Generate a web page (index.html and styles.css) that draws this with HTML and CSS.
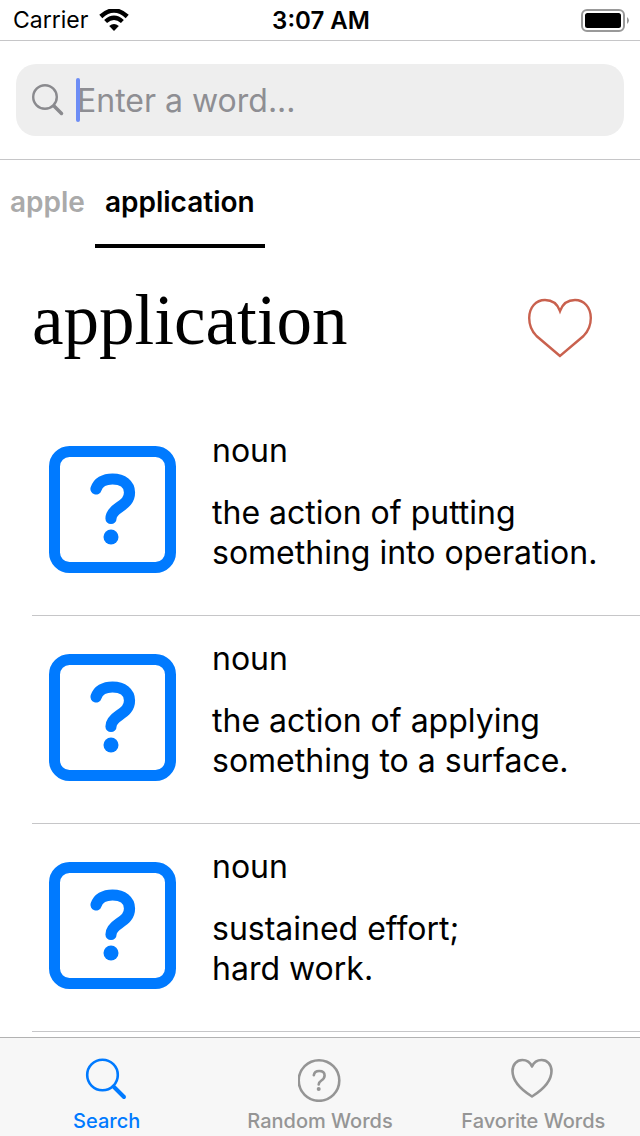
FILE: index.html
```html
<!DOCTYPE html>
<html lang="en">
<head>
<meta charset="utf-8">
<meta name="viewport" content="width=device-width, initial-scale=1">
<title>Dictionary</title>
<link rel="stylesheet" href="styles.css">
</head>
<body>
<svg class="defs" aria-hidden="true">
  <symbol id="question-box" viewBox="0 0 127 127">
    <rect x="5.5" y="5.5" width="116" height="116" rx="15" fill="none" stroke="currentColor" stroke-width="11"/>
    <path d="M47 43C49 36.500 55 33 63.500 33C74 33 80.500 38.500 80.500 46.500C80.500 54 76 57.500 70 61.500C64 65.500 62 68.500 62 72.500" fill="none" stroke="currentColor" stroke-width="11.200" stroke-linecap="round"/>
    <circle cx="62" cy="91" r="7.500" fill="currentColor"/>
  </symbol>
</svg>
<header class="status">
  <div class="carrier">
    <span>Carrier</span>
    <svg class="wifi" viewBox="0 0 30 22" aria-hidden="true">
      <path d="M1.800 7.500Q15-4.500 28.200 7.500" fill="none" stroke="currentColor" stroke-width="4.500"/>
      <path d="M6.600 12.500Q15 5 23.400 12.500" fill="none" stroke="currentColor" stroke-width="4.300"/>
      <path d="M10.200 17Q15 13 19.800 17L15 22Z" fill="currentColor"/>
    </svg>
  </div>
  <time class="time">3:07 AM</time>
  <svg class="battery" viewBox="0 0 48 23" aria-hidden="true">
    <rect x="1" y="1" width="42" height="21" rx="5" fill="none" stroke="#999" stroke-width="2"/>
    <rect x="4" y="4" width="36" height="15" rx="2.500"/>
    <path d="M46 8Q50 11.500 46 15Z" fill="#999"/>
  </svg>
</header>
<form class="search">
  <label class="field">
    <svg class="field-icon" viewBox="0 0 32 32" aria-label="Search">
      <circle cx="13" cy="13" r="11.800" fill="none" stroke="currentColor" stroke-width="2.400"/>
      <path d="M22 22L29.500 29.500" stroke="currentColor" stroke-width="3.500" stroke-linecap="round"/>
    </svg>
    <span class="entry"><input class="input" type="text" placeholder="Enter a word..."><span class="caret"></span></span>
  </label>
</form>
<nav class="words">
  <button class="word" type="button">apple</button>
  <button class="word active" type="button">application</button>
</nav>
<main class="main">
  <div class="heading">
    <h1 class="title">application</h1>
    <button class="favorite" type="button" aria-label="Add to favorites">
      <svg class="heart" viewBox="0 0 64 60" aria-hidden="true">
        <path d="M32 58L8.500 38C3.500 33 1.200 27 1.200 20C1.200 9.500 8 2 17 2C24 2 29.500 6 32 13C34.500 6 40 2 47 2C56 2 62.800 9.500 62.800 20C62.800 27 60.500 33 55.500 38Z" fill="none" stroke="currentColor" stroke-width="2.400"/>
      </svg>
    </button>
  </div>
  <ul class="list">
    <li class="item">
      <svg class="picture" aria-hidden="true"><use href="#question-box"/></svg>
      <div class="text"><p class="kind">noun</p><p class="meaning">the action of putting something into operation.</p></div>
    </li>
    <li class="item">
      <svg class="picture" aria-hidden="true"><use href="#question-box"/></svg>
      <div class="text"><p class="kind">noun</p><p class="meaning">the action of applying something to a surface.</p></div>
    </li>
    <li class="item">
      <svg class="picture" aria-hidden="true"><use href="#question-box"/></svg>
      <div class="text"><p class="kind">noun</p><p class="meaning">sustained effort;<br>hard work.</p></div>
    </li>
  </ul>
</main>
<nav class="tabbar">
  <a class="tab current" href="#search">
    <svg class="tab-icon" viewBox="0 0 44 44" aria-hidden="true">
      <circle cx="17.500" cy="17" r="15.300" fill="none" stroke="currentColor" stroke-width="2.600"/>
      <path d="M28.500 28.500L39 39" stroke="currentColor" stroke-width="4" stroke-linecap="round"/>
    </svg>
    <span>Search</span>
  </a>
  <a class="tab" href="#random">
    <svg class="tab-icon" viewBox="0 0 44 44" aria-hidden="true">
      <circle cx="21" cy="22.500" r="20.300" fill="none" stroke="currentColor" stroke-width="2.600"/>
      <path d="M15.800 17.300C16.200 14.500 18 13 21.200 13C24.500 13 26.600 14.800 26.600 17.500C26.600 20 25.400 21.200 23.400 22.500C21.400 23.800 20.700 24.700 20.700 26.500" fill="none" stroke="currentColor" stroke-width="2.600" stroke-linecap="round"/>
      <circle cx="20.700" cy="31" r="2" fill="currentColor"/>
    </svg>
    <span>Random Words</span>
  </a>
  <a class="tab" href="#favorites">
    <svg class="tab-icon" viewBox="0 0 44 44" aria-hidden="true">
      <path d="M21 38.500C13 33.500 1.500 24 1.500 13C1.500 6.500 5.700 2 11.300 2C16 2 19.300 4.500 21 8.500C22.700 4.500 26 2 30.700 2C36.300 2 40.500 6.500 40.500 13C40.500 24 29 33.500 21 38.500Z" fill="none" stroke="currentColor" stroke-width="2.600" stroke-linejoin="round"/>
    </svg>
    <span>Favorite Words</span>
  </a>
</nav>
</body>
</html>
```
FILE: styles.css
```css
* {
  box-sizing: border-box;
}

body {
  display: flex;
  flex-direction: column;
  min-height: 100vh;
  margin: 0;
  background: #fff;
  color: #000;
  font-family: Inter, "Liberation Sans", sans-serif;
}

button {
  padding: 0;
  border: 0;
  background: none;
  font: inherit;
}

svg {
  display: block;
  flex: none;
}

.defs {
  position: absolute;
  width: 0;
  height: 0;
}

.status {
  display: grid;
  grid-template-columns: 1fr auto 1fr;
  align-items: center;
  height: 41px;
  padding: 0 11px 0 13px;
  border-bottom: 1px solid #c6c6c8;
  font-size: 23px;
}

.carrier {
  display: flex;
  align-items: center;
  gap: 11px;
}

.wifi {
  width: 30px;
  height: 22px;
}

.time {
  font-size: 24px;
  font-weight: 600;
}

.battery {
  justify-self: end;
  width: 48px;
  height: 23px;
}

.search {
  padding: 23px 16px;
  border-bottom: 1px solid #c6c6c8;
}

.field {
  display: flex;
  align-items: center;
  gap: 12px;
  height: 72px;
  padding: 0 16px;
  border-radius: 20px;
  background: #eee;
  color: #8a8a8e;
}

.field-icon {
  width: 32px;
  height: 32px;
}

.entry {
  position: relative;
  flex: 1;
}

.input {
  width: 100%;
  height: 44px;
  padding: 0 1px;
  border: 0;
  outline: 0;
  background: none;
  color: #000;
  font: inherit;
  font-size: 32px;
}

.input::placeholder {
  color: #8e8e93;
  opacity: 1;
}

.caret {
  position: absolute;
  top: 0;
  left: 0;
  width: 4px;
  height: 44px;
  border-radius: 2px;
  background: #6d8df5;
}

.words {
  display: flex;
  height: 88px;
}

.word {
  padding: 0 10px;
  border-bottom: 4px solid transparent;
  color: #aaa;
  font-size: 28px;
  font-weight: 600;
}

.active {
  border-color: #000;
  color: #000;
}

.main {
  flex: 1;
}

.heading {
  display: flex;
  align-items: center;
  justify-content: space-between;
  height: 160px;
  padding: 0 48px 0 32px;
}

.title {
  margin: 0;
  padding-bottom: 16px;
  font-family: "Liberation Serif", serif;
  font-size: 71px;
  font-weight: 400;
  line-height: 80px;
}

.favorite {
  color: #c9614e;
}

.heart {
  width: 64px;
  height: 60px;
}

.list {
  margin: 0;
  padding: 0 0 0 32px;
  list-style: none;
}

.item {
  display: flex;
  gap: 36px;
  align-items: flex-end;
  padding: 23px 16px 42px 17px;
  border-bottom: 1px solid #c6c6c8;
}

.picture {
  width: 127px;
  height: 127px;
  color: #007aff;
}

.text {
  flex: 1;
  font-size: 32px;
  line-height: 40px;
}

.kind {
  margin: 0 0 22px;
}

.meaning {
  margin: 0;
}

.tabbar {
  position: sticky;
  bottom: 0;
  display: grid;
  grid-template-columns: repeat(3, 1fr);
  height: 99px;
  border-top: 1px solid #b2b2b2;
  background: #f7f7f7;
}

.tab {
  display: flex;
  flex-direction: column;
  align-items: center;
  gap: 7px;
  padding-top: 20px;
  color: #959595;
  font-size: 20px;
  font-weight: 500;
  line-height: 24px;
  text-decoration: none;
}

.current {
  color: #007aff;
}

.tab-icon {
  width: 44px;
  height: 44px;
}
```
